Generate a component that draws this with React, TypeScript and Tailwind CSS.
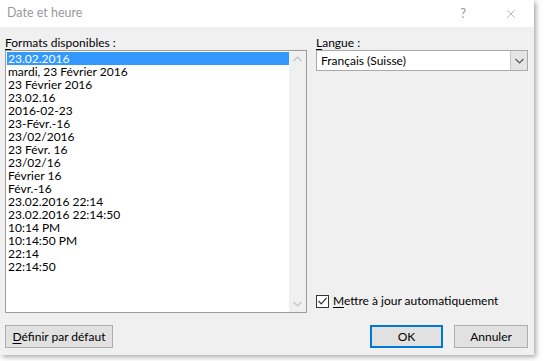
import { X } from 'lucide-react';

const formats = [
  '23.02.2016',
  'mardi, 23 Février 2016',
  '23 Février 2016',
  '23.02.16',
  '2016-02-23',
  '23-Févr.-16',
  '23/02/2016',
  '23 Févr. 16',
  '23/02/16',
  'Février 16',
  'Févr.-16',
  '23.02.2016 22:14',
  '23.02.2016 22:14:50',
  '10:14 PM',
  '10:14:50 PM',
  '22:14',
  '22:14:50',
];

function Chevron({ up, color = '#a6a6a6' }: { up?: boolean; color?: string }) {
  return (
    <svg width="9" height="6" viewBox="0 0 9 6" fill="none">
      <path d={up ? 'M0.5 5L4.5 1L8.5 5' : 'M0.5 1L4.5 5L8.5 1'} stroke={color} strokeWidth="1.2" />
    </svg>
  );
}

export default function App() {
  return (
    <div
      className="w-[546px] h-[361px] bg-white text-[12px] text-black overflow-hidden"
      style={{ fontFamily: 'Lato, "Noto Sans", sans-serif' }}
    >
      <div className="w-[534px] h-[355px] flex flex-col bg-[#f0f0f0] shadow-[2px_2px_5px_rgba(0,0,0,0.35)]">
        {/* title bar */}
        <div className="h-[27px] bg-white flex items-center pl-[7px] pr-[16px] shrink-0">
          <span className="text-[#9a9a9a] text-[12.5px] flex-1">Date et heure</span>
          <span className="text-[#9a9a9a] text-[13px] mr-[38px]">?</span>
          <X size={14} strokeWidth={1.2} className="text-[#9a9a9a]" />
        </div>

        <div className="flex-1 flex flex-col px-[5px] pt-[8px]">
          <div className="flex gap-[9px] flex-1">
            {/* formats */}
            <div className="w-[302px] flex flex-col">
              <div className="h-[15px] leading-[15px]">
                <span className="underline underline-offset-2">F</span>ormats disponibles :
              </div>
              <div className="h-[263px] border border-[#9c9c9c] bg-white flex p-[1px]">
                <div className="flex-1 flex flex-col">
                  {formats.map((f, i) => (
                    <div
                      key={f}
                      className={`h-[13px] leading-[13px] pl-[1px] whitespace-nowrap ${
                        i === 0 ? 'bg-[#3399ff] text-white' : ''
                      }`}
                    >
                      {f}
                    </div>
                  ))}
                </div>
                <div className="w-[17px] bg-[#f0f0f0] flex flex-col items-center justify-between py-[5px] -my-[1px] -mr-[1px]">
                  <Chevron up color="#c2c2c2" />
                  <Chevron color="#c2c2c2" />
                </div>
              </div>
            </div>

            {/* langue */}
            <div className="flex-1 flex flex-col pr-[1px]">
              <div className="h-[15px] leading-[15px]">
                <span className="underline underline-offset-2">L</span>angue :
              </div>
              <div className="h-[21px] border border-[#a9a9a9] bg-white flex items-center">
                <span className="flex-1 pl-[4px]">Français (Suisse)</span>
                <div className="w-[17px] h-full bg-[#e5e5e5] border-l border-[#c8c8c8] flex items-center justify-center">
                  <Chevron color="#5a5a5a" />
                </div>
              </div>
              <div className="flex-1" />
              <div className="flex items-center gap-[4px] mb-[3px]">
                <div className="w-[13px] h-[13px] border border-[#333] bg-white flex items-center justify-center">
                  <svg width="9" height="8" viewBox="0 0 9 8" fill="none">
                    <path d="M0.5 4L3.3 6.8L8.5 0.8" stroke="#333" strokeWidth="1.2" />
                  </svg>
                </div>
                <span>
                  <span className="underline underline-offset-2">M</span>ettre à jour automatiquement
                </span>
              </div>
            </div>
          </div>

          {/* buttons */}
          <div className="flex items-center h-[23px] mt-[12px] mb-[7px] pr-[1px]">
            <button className="h-[23px] w-[108px] border border-[#adadad] bg-[#e1e1e1]">
              <span className="underline underline-offset-2">D</span>éfinir par défaut
            </button>
            <div className="flex-1" />
            <button className="h-[23px] w-[73px] border-2 border-[#0078d7] bg-[#e1e1e1]">OK</button>
            <button className="h-[23px] w-[74px] ml-[11px] border border-[#adadad] bg-[#e1e1e1]">Annuler</button>
          </div>
        </div>
      </div>
    </div>
  );
}
